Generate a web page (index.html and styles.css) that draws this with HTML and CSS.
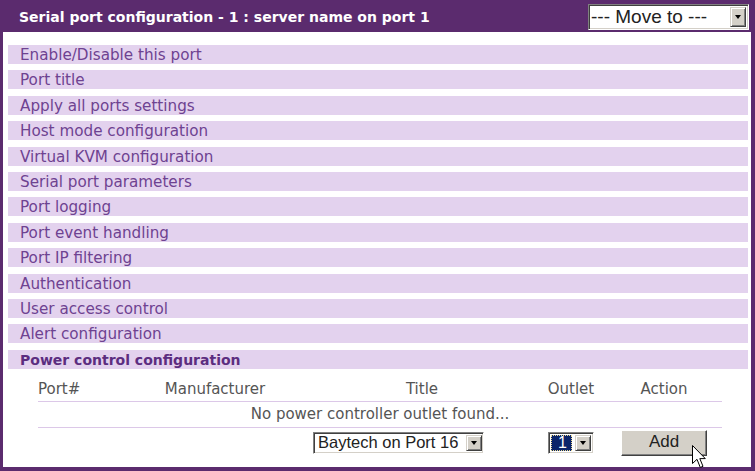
FILE: index.html
```html
<!DOCTYPE html>
<html>
<head>
<meta charset="utf-8">
<link rel="stylesheet" href="styles.css">
</head>
<body>
<div class="frame">
  <div class="header">
    <div class="title">Serial port configuration - 1 : server name on port 1</div>
    <div class="combo move">
      <span class="combo-text">--- Move to ---</span>
      <span class="combo-btn"><span class="tri"></span></span>
    </div>
  </div>
  <div class="body">
    <div class="menu">
      <div class="row">Enable/Disable this port</div>
      <div class="row">Port title</div>
      <div class="row">Apply all ports settings</div>
      <div class="row">Host mode configuration</div>
      <div class="row">Virtual KVM configuration</div>
      <div class="row">Serial port parameters</div>
      <div class="row">Port logging</div>
      <div class="row">Port event handling</div>
      <div class="row">Port IP filtering</div>
      <div class="row">Authentication</div>
      <div class="row">User access control</div>
      <div class="row">Alert configuration</div>
      <div class="row active">Power control configuration</div>
    </div>
    <div class="ptable">
      <div class="thead">
        <div class="c1">Port#</div>
        <div class="c2">Manufacturer</div>
        <div class="c3">Title</div>
        <div class="c4">Outlet</div>
        <div class="c5">Action</div>
      </div>
      <div class="empty">No power controller outlet found...</div>
      <div class="controls">
        <div class="c3 left">
          <div class="combo baytech">
            <span class="combo-text">Baytech on Port 16</span>
            <span class="combo-btn"><span class="tri"></span></span>
          </div>
        </div>
        <div class="c4">
          <div class="combo outlet">
            <span class="combo-text sel"><span class="focus">1</span></span>
            <span class="combo-btn"><span class="tri"></span></span>
          </div>
        </div>
        <div class="c5">
          <div class="btn">Add</div>
        </div>
      </div>
    </div>
  </div>
  <svg class="cursor" width="14" height="25" viewBox="0 0 14 25">
    <path d="M0.5 0.5 L0.5 18.5 L5 14.3 L8.3 22.5 L11 21.3 L7.8 13.6 L13.3 13.6 Z" fill="#fff" stroke="#000" stroke-width="1" stroke-linejoin="miter"/>
  </svg>
</div>
</body>
</html>
```

FILE: styles.css
```css
html, body {
  margin: 0;
  padding: 0;
  background: #ffffff;
}

.frame {
  position: relative;
  width: 755px;
  height: 471px;
  display: flex;
  flex-direction: column;
  box-sizing: border-box;
  font-family: "DejaVu Sans", Verdana, sans-serif;
}

.header {
  height: 32px;
  background: #5b2b6e;
  display: flex;
  align-items: center;
  justify-content: space-between;
  padding: 0 6px 0 19px;
  box-sizing: border-box;
}

.title {
  color: #ffffff;
  font-weight: bold;
  font-size: 14px;
  margin-top: 1px;
}

.body {
  flex: 1;
  background: #ffffff;
  border-left: 3px solid #5b2b6e;
  border-right: 4px solid #5b2b6e;
  border-bottom: 4px solid #5b2b6e;
  padding: 13px 3px 0 5px;
  display: flex;
  flex-direction: column;
}

.menu {
  display: flex;
  flex-direction: column;
  gap: 6.42px;
}

.row {
  height: 19px;
  line-height: 21px;
  background: #e3d2ee;
  color: #6e4291;
  font-size: 15.2px;
  padding-left: 12px;
  overflow: hidden;
}

.row.active {
  font-weight: bold;
  font-size: 14px;
  color: #5c2d80;
}

.ptable {
  margin: 2px 0 0 30px;
  width: 684px;
  font-size: 15px;
  color: #555555;
}

.thead, .controls {
  display: grid;
  grid-template-columns: 84px 186px 228px 70px 116px;
  align-items: center;
}

.thead {
  height: 23px;
  line-height: 23px;
  border-bottom: 1px solid #dcc8e8;
  margin-top: 7px;
}

.c1 { text-align: left; }
.c2, .c3, .c4, .c5 { text-align: center; display: flex; justify-content: center; }
.c3.left { justify-content: flex-start; padding-left: 5px; }

.controls > .c3 { grid-column: 3; }
.controls > .c4 { grid-column: 4; }
.controls > .c5 { grid-column: 5; }

.empty {
  text-align: center;
  height: 25px;
  line-height: 24px;
  border-bottom: 1px solid #dcc8e8;
}

.controls {
  margin-top: 2px;
  height: 26px;
}

.combo {
  display: flex;
  box-sizing: border-box;
  background: #ffffff;
  border-top: 1px solid #808080;
  border-left: 1px solid #808080;
  border-right: 1px solid #ffffff;
  border-bottom: 1px solid #ffffff;
  box-shadow: inset 1px 1px 0 #404040, inset -1px -1px 0 #d4d0c8;
  padding: 2px;
  font-family: "Liberation Sans", Arial, sans-serif;
  color: #000000;
}

.combo-text {
  flex: 1;
  min-width: 0;
  display: flex;
  align-items: center;
  padding-left: 2px;
  white-space: nowrap;
}

.combo-btn {
  width: 16px;
  flex: none;
  background: #d4d0c8;
  box-sizing: border-box;
  border-top: 1px solid #d4d0c8;
  border-left: 1px solid #d4d0c8;
  border-right: 1px solid #404040;
  border-bottom: 1px solid #404040;
  box-shadow: inset 1px 1px 0 #ffffff, inset -1px -1px 0 #808080;
  display: flex;
  align-items: center;
  justify-content: center;
}

.tri {
  width: 0;
  height: 0;
  border-left: 3.5px solid transparent;
  border-right: 3.5px solid transparent;
  border-top: 4px solid #000000;
  margin-top: 1px;
}

.move {
  width: 161px;
  height: 26px;
  font-size: 19px;
  margin-top: 1px;
}

.move .combo-text {
  padding-left: 0;
  color: #222222;
}

.baytech {
  width: 171px;
  height: 22px;
  font-size: 16.5px;
  padding-right: 1px;
}

.baytech .combo-text {
  padding-left: 2px;
  color: #222222;
}

.outlet {
  width: 46px;
  height: 22px;
  font-size: 16px;
}

.combo-text.sel {
  padding-left: 0;
  padding-right: 3px;
}

.focus {
  display: block;
  width: 100%;
  height: 100%;
  background: #0a246a;
  color: #ffffff;
  outline: 1px dotted #e8d890;
  outline-offset: -1px;
  line-height: 16px;
  padding-left: 2px;
  box-sizing: border-box;
}

.btn {
  width: 86px;
  height: 26px;
  box-sizing: border-box;
  background: #d4d0c8;
  border-top: 1px solid #ffffff;
  border-left: 1px solid #ffffff;
  border-right: 1px solid #404040;
  border-bottom: 1px solid #404040;
  box-shadow: inset -1px -1px 0 #808080;
  font-family: "Liberation Sans", Arial, sans-serif;
  font-size: 17px;
  color: #222222;
  display: flex;
  align-items: center;
  justify-content: center;
  padding-bottom: 2px;
}

.cursor {
  position: absolute;
  left: 692px;
  top: 445px;
}
```
